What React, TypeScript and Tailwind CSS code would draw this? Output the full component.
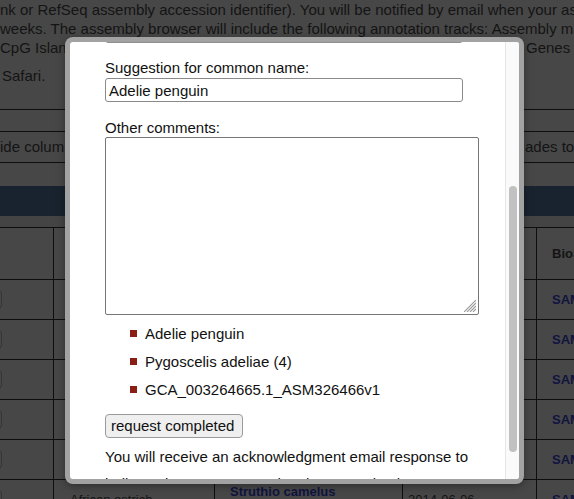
import React from "react";

const rows = [
  { name: "", sci: "", date: "", bio: "SAMN" },
  { name: "", sci: "", date: "", bio: "SAMN" },
  { name: "", sci: "", date: "", bio: "SAMN" },
  { name: "", sci: "", date: "", bio: "SAMN" },
  { name: "", sci: "", date: "", bio: "SAMN" },
  { name: "African ostrich", sci: "Struthio camelus", date: "2014-06-06", bio: "SAMN" },
];

const BackgroundPage = () => {
  return (
    <div className="w-[574px] h-[499px] bg-[#474747] text-[#141414] text-[15px]">
      <div className="h-[109px] leading-[19px] whitespace-nowrap overflow-hidden">
        <div>nk or RefSeq assembly accession identifier). You will be notified by email when your assembly</div>
        <div>weeks. The assembly browser will include the following annotation tracks: Assembly mapping</div>
        <div className="flex">
          <span className="w-[526px] shrink-0 overflow-hidden">CpG Islands, GC Percent, RepeatMasker, Simple Repeats, Augustus</span>
          <span>Genes and more</span>
        </div>
        <div className="mt-[9px] pl-[2px]">Safari.</div>
      </div>
      <div className="h-[22px] border-t border-[#0e0e0e]" />
      <div className="h-[32px] border-t border-b border-[#0e0e0e] flex items-center whitespace-nowrap overflow-hidden">
        <span className="w-[525px] shrink-0 overflow-hidden">ide columns by clicking the checkboxes in the header row</span>
        <span>ades to</span>
      </div>
      <div className="h-[23px]" />
      <div className="h-[30px] bg-[#19232f]" />
      <div className="h-[11px] bg-[#444444]" />
      <div className="grid grid-cols-[54px_161px_188px_134px_1fr] border-t border-[#0e0e0e] text-[13px]">
        <div className="h-[52px] border-r border-b border-[#0e0e0e]" />
        <div className="h-[52px] border-r border-b border-[#0e0e0e]" />
        <div className="h-[52px] border-r border-b border-[#0e0e0e]" />
        <div className="h-[52px] border-r border-b border-[#0e0e0e]" />
        <div className="h-[52px] border-b border-[#0e0e0e] flex items-center pl-[15px] font-bold whitespace-nowrap overflow-hidden">
          BioSample
        </div>
        {rows.map((r, i) => (
          <React.Fragment key={i}>
            <div className="h-[40px] border-r border-b border-[#0e0e0e] flex items-center overflow-hidden">
              <div className="-ml-[20px] w-[22px] h-[19px] rounded-[4px] border border-[#363636] shrink-0" />
            </div>
            <div className="h-[40px] border-r border-b border-[#0e0e0e] flex items-center pl-[16px] whitespace-nowrap overflow-hidden">
              {r.name}
            </div>
            <div className="h-[40px] border-r border-b border-[#0e0e0e] flex flex-col justify-center pl-[15px] leading-[16px] font-bold text-[#10143f] whitespace-nowrap overflow-hidden">
              {r.sci && <span>{r.sci}</span>}
              {r.sci && <span>(ostrich)</span>}
            </div>
            <div className="h-[40px] border-r border-b border-[#0e0e0e] flex items-center pl-[5px] whitespace-nowrap overflow-hidden">
              {r.date}
            </div>
            <div className="h-[40px] border-b border-[#0e0e0e] flex items-center pl-[15px] font-bold text-[#10143f] whitespace-nowrap overflow-hidden">
              {r.bio}
            </div>
          </React.Fragment>
        ))}
      </div>
    </div>
  );
};

const RequestDialog = () => {
  return (
    <div className="absolute left-[65px] top-[37px] w-[459px] h-[447px] rounded-[8px] bg-[#a2a2a2] p-[5px] shadow-[0_2px_8px_rgba(0,0,0,0.35)]">
      <div className="h-full bg-white rounded-[3px] flex overflow-hidden text-[15px] text-[#111111]">
        <div className="flex-1 overflow-hidden pl-[35px]">
          <div className="-mt-[23px] h-[24px] w-[358px] border border-[#8e8e8e] rounded-[3px]" />
          <div className="mt-[16px] leading-[17px]">Suggestion for common name:</div>
          <div className="mt-[2px] h-[24px] w-[358px] border border-[#8a8a8a] rounded-[3px] flex items-center pl-[3px] leading-[17px]">
            Adelie penguin
          </div>
          <div className="mt-[17px] leading-[17px]">Other comments:</div>
          <div className="mt-[1px] h-[178px] w-[374px] border border-[#767676] rounded-[2px] flex items-end justify-end p-[2px]">
            <svg width="12" height="12" viewBox="0 0 12 12">
              <path d="M0 12L12 0M3 12L12 3M6 12L12 6M9 12L12 9" stroke="#9a9a9a" strokeWidth="1.1" />
            </svg>
          </div>
          <ul className="mt-[10px] flex flex-col gap-[10.75px] leading-[17px]">
            {["Adelie penguin", "Pygoscelis adeliae (4)", "GCA_003264665.1_ASM326466v1"].map((t) => (
              <li key={t} className="flex items-center pl-[25px] gap-[8px]">
                <span className="w-[7px] h-[7px] bg-[#8a1e16] shrink-0" />
                <span>{t}</span>
              </li>
            ))}
          </ul>
          <button className="mt-[16px] h-[24px] w-[138px] border border-[#9a9a9a] rounded-[4px] bg-[#efefef] text-left pl-[5px] leading-[17px] text-[15px] text-[#111111]">
            request completed
          </button>
          <p className="mt-[10px] leading-[17px]">You will receive an acknowledgment email response to</p>
          <p className="mt-[10px] leading-[17px]">indicate that your request has been received.</p>
        </div>
        <div className="w-[14px] shrink-0 bg-[#fafafa] border-l border-[#e6e6e6]">
          <div className="mt-[144px] ml-[3px] w-[8px] h-[266px] rounded-full bg-[#c1c1c1]" />
        </div>
      </div>
    </div>
  );
};

export default function App() {
  return (
    <div className="relative w-[574px] h-[499px] overflow-hidden font-['Liberation_Sans',Arial,sans-serif]">
      <BackgroundPage />
      <RequestDialog />
    </div>
  );
}
